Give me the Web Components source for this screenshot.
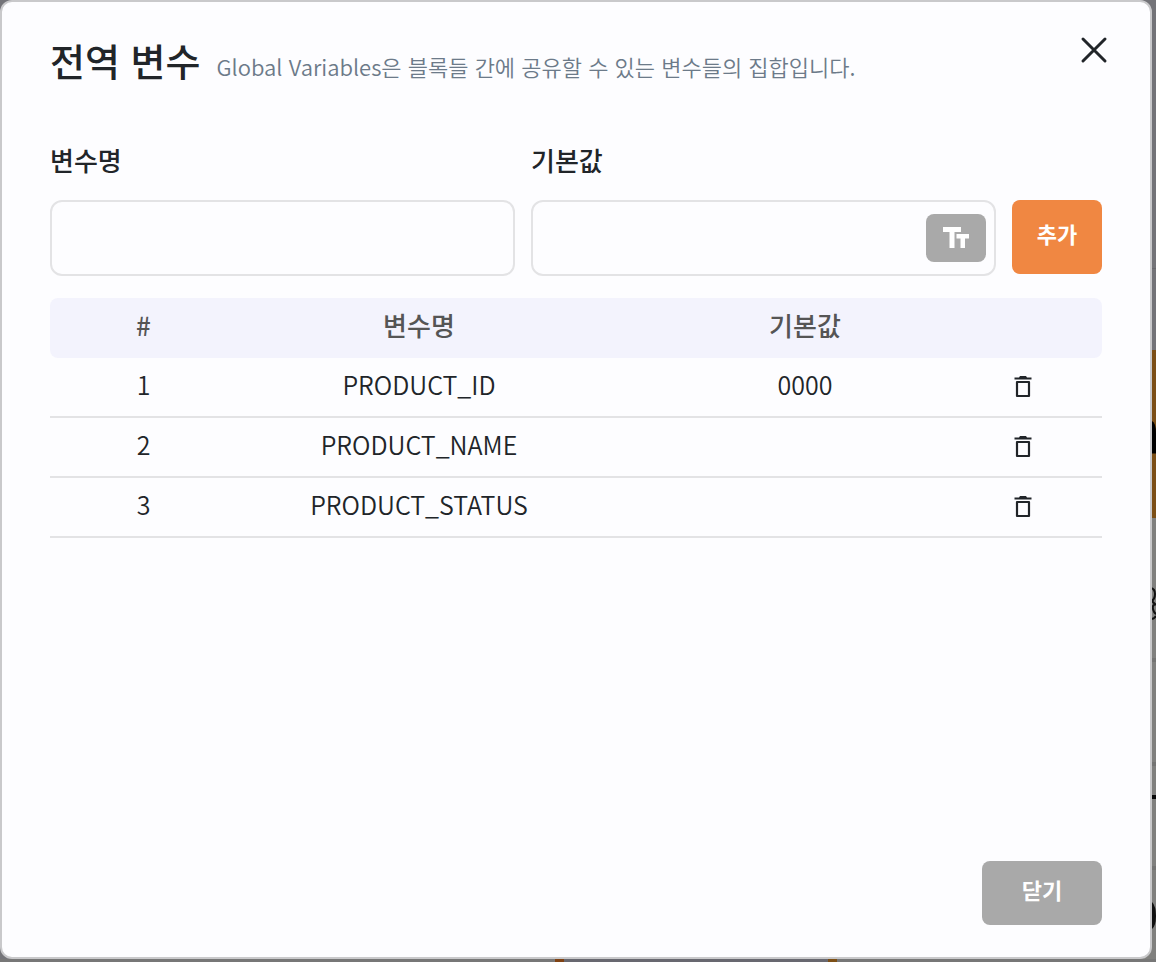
<!DOCTYPE html>
<html lang="ko">
<head>
<meta charset="utf-8">
<title>전역 변수</title>
<style>
html, body { margin: 0; height: 100%; }
body { font-family: "Noto Sans CJK KR", "Noto Sans", sans-serif; color: #212529; background: #747479; overflow: hidden; }
</style>
</head>
<body>
<variables-page></variables-page>

<template id="page-tpl">
<style>
:host { position: relative; box-sizing: border-box; min-height: 100vh; padding: 0 4px 3px 0; display: flex; overflow: hidden; }
.canvas { position: absolute; inset: 0; }
global-variables-dialog { flex: 1; position: relative; }
</style>
<backdrop-canvas class="canvas"></backdrop-canvas>
<global-variables-dialog></global-variables-dialog>
</template>

<template id="backdrop-tpl">
<style>
:host { display: block; background: #747479; }
.edge, .foot { position: absolute; }
.edge { right: 0; top: 0; width: 12px; height: 962px; }
.foot { left: 0; bottom: 0; width: 100%; height: 3px; background: linear-gradient(90deg, #777 0 555px, #7f4213 555px 564px, #686870 564px 828px, #7c4f16 828px 837px, #777 837px); }
</style>
<svg class="edge" viewBox="0 0 12 962" aria-hidden="true">
<rect width="12" height="350" fill="#737378"/>
<rect y="268" width="12" height="1" fill="#68686c"/>
<rect y="350" width="12" height="168" fill="#7c4f16"/>
<path d="M8 421q4 2 4 12v20H8z" fill="#000"/>
<rect y="453" width="12" height="1" fill="#3d2810"/>
<rect y="518" width="12" height="444" fill="#80807e"/>
<path d="M7 588q4 1 4 6t-4 8M7 599q2 4 5 6M12 604q-4 1-3 5t3 5M7 619q3 0 5-3" fill="none" stroke="#111" stroke-width="2"/>
<path d="M0 660h12M0 764h12M0 868h12" stroke="#747473" stroke-width="4"/>
<rect y="795" width="12" height="4" fill="#0a0a0a"/>
<path d="M8 902q4 4 4 14t-4 13z" fill="#111"/>
</svg>
<div class="foot"></div>
</template>

<template id="dialog-tpl">
<style>
:host { display: flex; flex-direction: column; box-sizing: border-box; border: 2px solid #c9c9cb; border-radius: 12px; background: #fdfdff; padding: 32px 48px; }
header { display: flex; align-items: flex-start; }
.titles { flex: 1; display: flex; align-items: baseline; gap: 16px; }
h1 { margin: 0; font-size: 38px; line-height: 52px; font-weight: 500; }
p { margin: 0; font-size: 22px; line-height: 32px; color: #6c7a89; font-weight: 350; }
.close { border: 0; background: none; padding: 0; width: 32px; height: 32px; margin-right: -8px; color: inherit; }
.close svg { display: block; }
variable-form { margin-top: 54px; }
variable-table { margin-top: 22px; }
footer { margin-top: auto; display: flex; justify-content: flex-end; }
</style>
<header>
<div class="titles"><h1>전역 변수</h1><p>Global Variables은 블록들 간에 공유할 수 있는 변수들의 집합입니다.</p></div>
<button class="close" type="button" aria-label="닫기"><svg width="32" height="32" viewBox="0 0 32 32" aria-hidden="true"><path d="M5 5L27 27M27 5L5 27" stroke="currentColor" stroke-width="3" stroke-linecap="round"/></svg></button>
</header>
<variable-form></variable-form>
<variable-table></variable-table>
<footer><action-button class="dismiss">닫기</action-button></footer>
</template>

<template id="button-tpl">
<style>
:host { display: block; width: 90px; height: 74px; --fill: #f08742; }
:host(.dismiss) { width: 120px; height: 64px; --fill: #a9a9a9; }
button { width: 100%; height: 100%; border: 0; border-radius: 8px; padding: 0 0 8px; background: var(--fill); color: #fff; font: inherit; font-size: 22px; line-height: 32px; font-weight: 700; }
</style>
<button type="button"><slot></slot></button>
</template>

<template id="form-tpl">
<style>
:host { display: grid; grid-template-columns: 1fr 1fr 90px; column-gap: 16px; align-items: start; }
label { display: block; font-size: 26px; line-height: 40px; font-weight: 500; margin-bottom: 20px; }
.box { display: flex; align-items: center; box-sizing: border-box; height: 76px; border: 2px solid #e3e3e5; border-radius: 12px; padding: 0 8px; }
input { flex: 1; min-width: 0; height: 48px; border: 0; outline: 0; background: none; font: inherit; font-size: 26px; color: inherit; }
.type { width: 60px; height: 48px; border: 0; border-radius: 8px; background: #a9a9a9; color: #fff; padding: 0; }
.type svg { display: block; margin: 0 auto; }
action-button { margin-top: 60px; }
</style>
<div><label for="name">변수명</label><div class="box"><input id="name" type="text"></div></div>
<div><label for="value">기본값</label><div class="box"><input id="value" type="text"><button class="type" type="button" aria-label="텍스트 형식"><svg width="26" height="22" viewBox="0 0 26 22" fill="currentColor" aria-hidden="true"><path d="M0 0H18V5H11.500V21H6.500V5H0zM13.500 7H26V11.500H22V21H17.500V11.500H13.500z"/></svg></button></div></div>
<action-button>추가</action-button>
</template>

<template id="table-tpl">
<style>
:host { display: block; }
table { width: 100%; border-collapse: separate; border-spacing: 0; table-layout: fixed; line-height: 40px; text-align: center; }
th, td { box-sizing: border-box; height: 60px; padding: 0 0 6px; }
td { font-size: 25px; font-weight: 350; }
th { background: #f3f3fd; color: #555; font-size: 26px; font-weight: 500; }
th:first-child { border-radius: 8px 0 0 8px; }
th:last-child { border-radius: 0 8px 8px 0; }
td { border-bottom: 2px solid #e3e3e5; }
td:last-child { padding: 0 0 0 5px; }
.num { width: 187px; } .name { width: 34.6%; } .act { width: 93px; }
.remove { display: block; padding: 0; border: 0; background: none; color: inherit; }
.remove svg { display: block; }
</style>
<table>
<colgroup><col class="num"><col class="name"><col><col class="act"></colgroup>
<thead><tr><th scope="col">#</th><th scope="col">변수명</th><th scope="col">기본값</th><th></th></tr></thead>
<tbody></tbody>
</table>
</template>

<template id="row-tpl">
<tr><td></td><td></td><td></td><td><button class="remove" type="button" aria-label="삭제"><svg width="18" height="22" viewBox="0 0 18 22" aria-hidden="true"><path fill="currentColor" d="M6 0H12L13 1.500H17.500V3.500H.5V1.500H5z"/><path d="M3 6H15V20H3z" fill="none" stroke="currentColor" stroke-width="2.200" stroke-linejoin="round"/></svg></button></td></tr>
</template>

<script>
const mount = (host, id) => host.attachShadow({ mode: "open" }).append(document.getElementById(id).content.cloneNode(true));

customElements.define("action-button", class extends HTMLElement {
  constructor() { super(); mount(this, "button-tpl"); }
});
customElements.define("backdrop-canvas", class extends HTMLElement {
  constructor() { super(); mount(this, "backdrop-tpl"); }
});
customElements.define("variable-form", class extends HTMLElement {
  constructor() { super(); mount(this, "form-tpl"); }
});
customElements.define("variable-table", class extends HTMLElement {
  constructor() {
    super();
    mount(this, "table-tpl");
    const body = this.shadowRoot.querySelector("tbody");
    [["PRODUCT_ID", "0000"], ["PRODUCT_NAME", ""], ["PRODUCT_STATUS", ""]].forEach(([name, value], i) => {
      const row = document.getElementById("row-tpl").content.cloneNode(true);
      const cells = row.querySelectorAll("td");
      cells[0].textContent = i + 1;
      cells[1].textContent = name;
      cells[2].textContent = value;
      body.append(row);
    });
  }
});
customElements.define("global-variables-dialog", class extends HTMLElement {
  constructor() { super(); mount(this, "dialog-tpl"); }
});
customElements.define("variables-page", class extends HTMLElement {
  constructor() { super(); mount(this, "page-tpl"); }
});
</script>
</body>
</html>
